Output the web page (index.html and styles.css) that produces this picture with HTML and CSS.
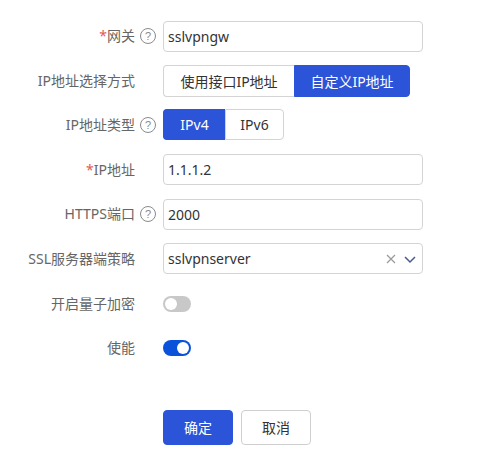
FILE: index.html
```html
<!DOCTYPE html>
<html lang="zh">
<head>
<meta charset="utf-8">
<link rel="stylesheet" href="styles.css">
</head>
<body>
<form class="form">
  <div class="row">
    <label class="label"><span class="req">*</span>网关</label>
    <span class="hint"><span class="help">?</span></span>
    <div class="control"><div class="input">sslvpngw</div></div>
  </div>
  <div class="row">
    <label class="label">IP地址选择方式</label>
    <span class="hint"></span>
    <div class="control">
      <div class="seg">
        <span class="seg-btn w-iface">使用接口IP地址</span>
        <span class="seg-btn active w-custom">自定义IP地址</span>
      </div>
    </div>
  </div>
  <div class="row">
    <label class="label">IP地址类型</label>
    <span class="hint"><span class="help">?</span></span>
    <div class="control">
      <div class="seg">
        <span class="seg-btn active small w-v4">IPv4</span>
        <span class="seg-btn small w-v6">IPv6</span>
      </div>
    </div>
  </div>
  <div class="row">
    <label class="label"><span class="req">*</span>IP地址</label>
    <span class="hint"></span>
    <div class="control"><div class="input">1.1.1.2</div></div>
  </div>
  <div class="row">
    <label class="label">HTTPS端口</label>
    <span class="hint"><span class="help">?</span></span>
    <div class="control"><div class="input">2000</div></div>
  </div>
  <div class="row">
    <label class="label">SSL服务器端策略</label>
    <span class="hint"></span>
    <div class="control">
      <div class="input select">
        <span class="sel-text">sslvpnserver</span>
        <svg class="clear" width="12" height="12" viewBox="0 0 12 12"><path d="M2 2 L10 10 M10 2 L2 10" stroke="#9a9a9a" stroke-width="1.2" fill="none"/></svg>
        <svg class="chev" width="14" height="12" viewBox="0 0 14 12"><path d="M2 4 L7 9 L12 4" stroke="#4a5a8a" stroke-width="1.5" fill="none"/></svg>
      </div>
    </div>
  </div>
  <div class="row">
    <label class="label">开启量子加密</label>
    <span class="hint"></span>
    <div class="control"><span class="switch"><span class="knob"></span></span></div>
  </div>
  <div class="row">
    <label class="label">使能</label>
    <span class="hint"></span>
    <div class="control"><span class="switch on"><span class="knob"></span></span></div>
  </div>
  <div class="actions">
    <button type="button" class="btn primary">确定</button>
    <button type="button" class="btn">取消</button>
  </div>
</form>
</body>
</html>
```
FILE: styles.css
```css
body {
  margin: 8px;
  font-family: "Noto Sans", "Noto Sans CJK SC", sans-serif;
  font-size: 14px;
  color: #333;
  background: #fff;
}
.form {
  padding-top: 12px;
  display: flex;
  flex-direction: column;
  gap: 12.6px;
}
.row {
  display: flex;
  align-items: center;
  height: 32px;
}
.label {
  width: 127px;
  text-align: right;
  color: #666;
  line-height: 20px;
  flex: none;
}
.req {
  color: #e05a55;
}
.hint {
  width: 28px;
  flex: none;
  display: flex;
  align-items: center;
  padding-left: 5px;
  box-sizing: border-box;
}
.help {
  width: 14px;
  height: 14px;
  border: 1px solid #8a8a8a;
  border-radius: 50%;
  color: #8a8a8a;
  font-size: 11px;
  line-height: 14px;
  text-align: center;
  font-family: "Liberation Sans", sans-serif;
}
.control {
  display: flex;
  align-items: center;
}
.input {
  width: 260px;
  height: 31px;
  box-sizing: border-box;
  border: 1px solid #d4d4d4;
  border-radius: 4px;
  padding: 0 4px;
  line-height: 29px;
  color: #333;
  font-size: 14px;
}
.select {
  display: flex;
  align-items: center;
}
.sel-text {
  flex: 1;
}
.clear {
  margin-right: 6px;
}
.chev {
  margin-right: 1px;
}
.seg {
  display: flex;
  height: 32px;
}
.seg-btn {
  display: flex;
  align-items: center;
  justify-content: center;
  box-sizing: border-box;
  height: 32px;
  padding: 0;
  border: 1px solid #d4d4d4;
  color: #333;
  background: #fff;
}
.w-iface { width: 131px; }
.w-custom { width: 116px; }
.w-v4 { width: 62px; }
.w-v6 { width: 59px; }
.seg-btn:first-child {
  border-radius: 4px 0 0 4px;
  border-right: none;
}
.seg-btn:last-child {
  border-radius: 0 4px 4px 0;
}
.seg-btn.active {
  background: #2b54d8;
  border-color: #2b54d8;
  color: #fff;
}
.seg-btn.small {
  height: 31px;
}
.switch {
  width: 28px;
  height: 16px;
  border-radius: 8px;
  background: #c8c8c8;
  position: relative;
  display: block;
}
.knob {
  position: absolute;
  top: 2px;
  left: 2px;
  width: 12px;
  height: 12px;
  border-radius: 50%;
  background: #fff;
}
.switch.on {
  background: #0a52d9;
}
.switch.on .knob {
  left: 14px;
}
.actions {
  display: flex;
  gap: 8px;
  padding-left: 155px;
  margin-top: 33px;
}
.btn {
  width: 70px;
  height: 35px;
  border: 1px solid #cfcfcf;
  border-radius: 4px;
  background: #fff;
  color: #333;
  font-family: "Noto Sans CJK SC", sans-serif;
  font-size: 14px;
  padding: 0;
}
.btn.primary {
  background: #2b54d8;
  border-color: #2b54d8;
  color: #fff;
}
```
